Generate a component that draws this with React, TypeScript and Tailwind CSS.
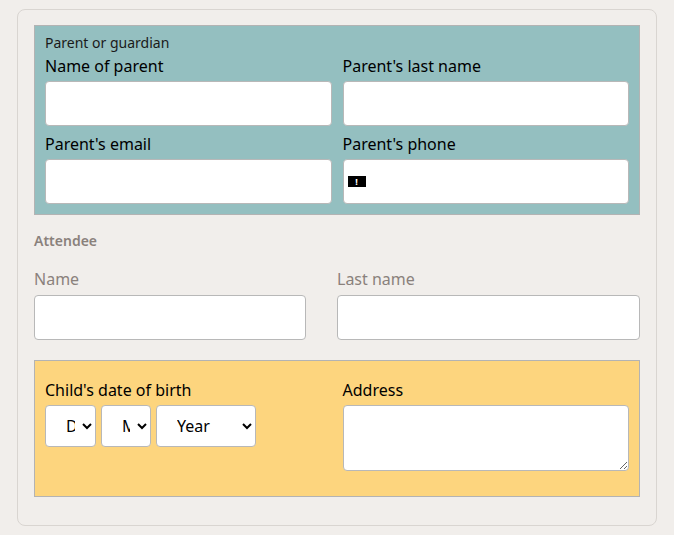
export default function App() {
  const input = "block w-full h-[45px] bg-white border border-[#b8b8b8] rounded-[4px]";
  const sel = "h-[42px] bg-white border border-[#b8b8b8] rounded-[4px] text-[16px] text-black pl-4 pr-1";
  return (
    <div className="min-h-[535px] bg-[#f1eeeb] pt-[9px] pl-[17px] pr-[17px] font-['Inter',sans-serif]">
      <div className="w-[640px] h-[517px] border border-[#d9d5d1] rounded-[8px] px-4 pt-[15px]">
        <div className="bg-[#94bfc0] border border-[#b3b3b3] px-[10px] pt-[7px] pb-[10px]">
          <div className="text-[14px] text-[#1a1a1a] leading-5">Parent or guardian</div>
          <div className="grid grid-cols-2 gap-x-[11px] gap-y-[8px] mt-[3px]">
            {["Name of parent", "Parent's last name", "Parent's email", "Parent's phone"].map((l, i) => (
              <div key={l}>
                <div className="text-[16px] text-black leading-5 mb-[5px]">{l}</div>
                <div className={input + " flex items-center pl-1"}>
                  {i === 3 && (
                    <span className="inline-flex items-center justify-center w-[18px] h-[11px] bg-black text-white text-[9px] font-bold leading-none">!</span>
                  )}
                </div>
              </div>
            ))}
          </div>
        </div>
        <div className="text-[14px] font-semibold text-[#8a817c] mt-[16px] leading-5">Attendee</div>
        <div className="flex gap-[31px] mt-[18px]">
          <div className="w-[272px]">
            <div className="text-[16px] text-[#8a817c] leading-5 mb-[6px]">Name</div>
            <div className={input}></div>
          </div>
          <div className="flex-1">
            <div className="text-[16px] text-[#8a817c] leading-5 mb-[6px]">Last name</div>
            <div className={input}></div>
          </div>
        </div>
        <div className="bg-[#fdd57e] border border-[#b3b3b3] mt-[20px] h-[137px] px-[10px] pt-[19px] grid grid-cols-2 gap-x-[11px]">
          <div>
            <div className="text-[16px] text-black leading-5 mb-[5px]">Child's date of birth</div>
            <div className="flex gap-[5px]">
              <select className={sel + " w-[51px]"}><option>D</option></select>
              <select className={sel + " w-[50px]"}><option>M</option></select>
              <select className={sel + " w-[100px]"}><option>Year</option></select>
            </div>
          </div>
          <div>
            <div className="text-[16px] text-black leading-5 mb-[5px]">Address</div>
            <textarea className="block w-full h-[66px] bg-white border border-[#b8b8b8] rounded-[4px]"></textarea>
          </div>
        </div>
      </div>
    </div>
  );
}
